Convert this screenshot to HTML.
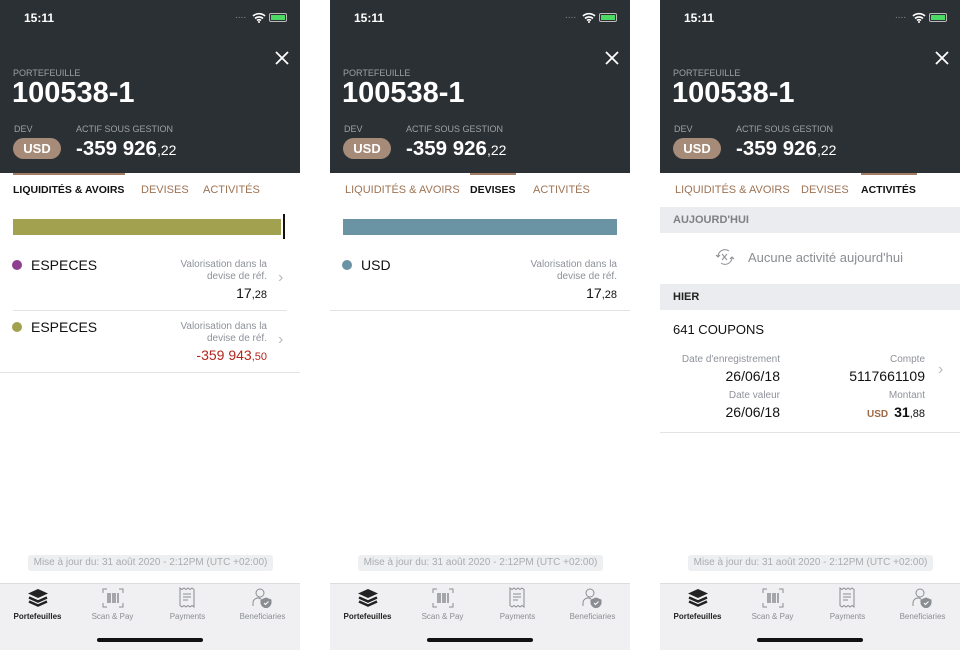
<!DOCTYPE html><html><head><meta charset="utf-8"><style>
*{margin:0;padding:0;box-sizing:border-box}
body{width:960px;height:650px;background:#fff;font-family:"Liberation Sans",sans-serif;position:relative;overflow:hidden}
.p{position:absolute;top:0;width:300px;height:650px;background:#fff;overflow:hidden}
.a{position:absolute;white-space:nowrap}
.hd{position:absolute;left:0;top:0;width:300px;height:173px;background:#2b3034}
.tab{font-size:11px;top:184px;color:#9e7353}
.tab.on{color:#111;font-weight:bold;font-size:10.5px}
.ul{position:absolute;top:173px;height:2px;background:#a27d63}
.gray{color:#8e9299;font-size:10px;text-align:right;line-height:12px}
.chev{color:#bbb;font-size:16px}
.sep{position:absolute;height:1px;background:#e3e3e6}
.bb{position:absolute;left:0;top:583px;width:300px;height:67px;background:#f0f0f2;border-top:1px solid #ddd}
.lbl{font-size:8px;color:#8a8d92;top:612px;text-align:center;width:75px}
.upd{position:absolute;left:28px;top:555px;width:245px;height:16px;background:#eeeff1;border-radius:3px;font-size:10px;color:#a9abaf;text-align:center;line-height:16px}
.home{position:absolute;left:97px;top:638px;width:106px;height:4px;border-radius:2px;background:#111}
.big{left:12px;top:77px;color:#fff;font-size:29px;font-weight:bold}
.amt{left:76px;top:137px;color:#fff;font-size:20.5px;font-weight:bold}
.amt span{font-size:14px;font-weight:normal}
</style></head><body>

<div class="p" style="left:0">
<div class="hd"></div>
<div class="a" style="left:24px;top:11px;color:#fff;font-size:12px;font-weight:bold">15:11</div>
<div class="a" style="left:235px;top:10px;color:#888;font-size:10px">....</div>
<svg class="a" style="left:252px;top:12px" width="14" height="11" viewBox="0 0 14 11"><path d="M1 4a9 9 0 0 1 12 0M3 6.5a6 6 0 0 1 8 0M5 8.5a3 3 0 0 1 4 0" stroke="#fff" stroke-width="1.6" fill="none"/><circle cx="7" cy="10" r="1" fill="#fff"/></svg>
<div class="a" style="left:269px;top:13px;width:18px;height:9px;border:1px solid #bbb;border-radius:2px;padding:1px"><div style="width:100%;height:100%;background:#4cd964"></div></div>
<svg class="a" style="left:275px;top:51px" width="14" height="14"><path d="M1 1L13 13M13 1L1 13" stroke="#fff" stroke-width="1.8"/></svg>
<div class="a" style="left:13px;top:68px;color:#9ca1a6;font-size:9px">PORTEFEUILLE</div>
<div class="a big">100538-1</div>
<div class="a" style="left:14px;top:124px;color:#9ca1a6;font-size:9px">DEV</div>
<div class="a" style="left:76px;top:124px;color:#9ca1a6;font-size:9px">ACTIF SOUS GESTION</div>
<div class="a" style="left:13px;top:138px;width:48px;height:21px;border-radius:11px;background:#a68b79;color:#fff;font-size:13px;font-weight:bold;text-align:center;line-height:21px">USD</div>
<div class="a amt">-359 926<span>,22</span></div>
<div class="ul" style="left:13px;width:112px"></div>
<div class="a tab on" style="left:13px">LIQUIDITÉS &amp; AVOIRS</div>
<div class="a tab" style="left:141px">DEVISES</div>
<div class="a tab" style="left:203px">ACTIVITÉS</div>
<div class="a" style="left:13px;top:219px;width:268px;height:16px;background:#a1a14f"></div>
<div class="a" style="left:283px;top:214px;width:2px;height:25px;background:#111"></div>
<div class="a" style="left:12px;top:260px;width:10px;height:10px;border-radius:50%;background:#8f3f8f"></div>
<div class="a" style="left:31px;top:257px;font-size:14px;color:#111">ESPECES</div>
<div class="a gray" style="right:33px;top:259px">Valorisation dans la<br>devise de réf.</div>
<div class="a" style="right:33px;top:285px;font-size:14px;color:#111">17<span style="font-size:11px">,28</span></div>
<div class="a chev" style="left:278px;top:269px">›</div>
<div class="sep" style="left:13px;width:274px;top:310px"></div>
<div class="a" style="left:12px;top:322px;width:10px;height:10px;border-radius:50%;background:#a1a14f"></div>
<div class="a" style="left:31px;top:319px;font-size:14px;color:#111">ESPECES</div>
<div class="a gray" style="right:33px;top:321px">Valorisation dans la<br>devise de réf.</div>
<div class="a" style="right:33px;top:347px;font-size:14px;color:#b3261e">-359 943<span style="font-size:11px">,50</span></div>
<div class="a chev" style="left:278px;top:331px">›</div>
<div class="sep" style="left:0;width:300px;top:372px"></div>
<div class="upd">Mise à jour du: 31 août 2020 - 2:12PM (UTC +02:00)</div>
<div class="bb"></div>
<svg class="a" style="left:27px;top:588px" width="22" height="20" viewBox="0 0 22 20"><path d="M11 1L21 5.5L11 10L1 5.5Z" fill="#222"/><path d="M2 9.5L11 13.5L20 9.5M2 13.5L11 17.5L20 13.5" stroke="#222" stroke-width="2.5" fill="none"/></svg>
<div class="a lbl" style="left:0;color:#222;font-weight:bold">Portefeuilles</div>
<svg class="a" style="left:102px;top:588px" width="22" height="20" viewBox="0 0 22 20" stroke="#8a8d92" fill="none"><path d="M1 5V1h4M17 1h4v4M21 15v4h-4M5 19H1v-4"/><path d="M6 5v10M8 5v10M11 5v10M13 5v10M16 5v10" stroke-width="1.5"/></svg>
<div class="a lbl" style="left:75px">Scan &amp; Pay</div>
<svg class="a" style="left:179px;top:587px" width="16" height="22" viewBox="0 0 16 22" stroke="#8a8d92" fill="none"><path d="M1 1l2 1.5 2-1.5 2 1.5 2-1.5 2 1.5 2-1.5 2 1.5V20l-2-1.5-2 1.5-2-1.5-2 1.5-2-1.5-2 1.5-2-1.5Z"/><path d="M4 7h8M4 10h8M4 13h5"/></svg>
<div class="a lbl" style="left:150px">Payments</div>
<svg class="a" style="left:252px;top:588px" width="20" height="20" viewBox="0 0 20 20" stroke="#8a8d92" fill="none"><circle cx="8" cy="5" r="4"/><path d="M1 18v-3a5 5 0 0 1 8-4"/><path d="M14 10l5 2v3c0 2-2 4-5 5-3-1-5-3-5-5v-3Z" fill="#8a8d92"/><path d="M12 15l1.5 1.5 3-3" stroke="#fff"/></svg>
<div class="a lbl" style="left:225px">Beneficiaries</div>
<div class="home"></div>
</div>

<div class="p" style="left:330px">
<div class="hd"></div>
<div class="a" style="left:24px;top:11px;color:#fff;font-size:12px;font-weight:bold">15:11</div>
<div class="a" style="left:235px;top:10px;color:#888;font-size:10px">....</div>
<svg class="a" style="left:252px;top:12px" width="14" height="11" viewBox="0 0 14 11"><path d="M1 4a9 9 0 0 1 12 0M3 6.5a6 6 0 0 1 8 0M5 8.5a3 3 0 0 1 4 0" stroke="#fff" stroke-width="1.6" fill="none"/><circle cx="7" cy="10" r="1" fill="#fff"/></svg>
<div class="a" style="left:269px;top:13px;width:18px;height:9px;border:1px solid #bbb;border-radius:2px;padding:1px"><div style="width:100%;height:100%;background:#4cd964"></div></div>
<svg class="a" style="left:275px;top:51px" width="14" height="14"><path d="M1 1L13 13M13 1L1 13" stroke="#fff" stroke-width="1.8"/></svg>
<div class="a" style="left:13px;top:68px;color:#9ca1a6;font-size:9px">PORTEFEUILLE</div>
<div class="a big">100538-1</div>
<div class="a" style="left:14px;top:124px;color:#9ca1a6;font-size:9px">DEV</div>
<div class="a" style="left:76px;top:124px;color:#9ca1a6;font-size:9px">ACTIF SOUS GESTION</div>
<div class="a" style="left:13px;top:138px;width:48px;height:21px;border-radius:11px;background:#a68b79;color:#fff;font-size:13px;font-weight:bold;text-align:center;line-height:21px">USD</div>
<div class="a amt">-359 926<span>,22</span></div>
<div class="ul" style="left:140px;width:46px"></div>
<div class="a tab" style="left:15px">LIQUIDITÉS &amp; AVOIRS</div>
<div class="a tab on" style="left:140px">DEVISES</div>
<div class="a tab" style="left:203px">ACTIVITÉS</div>
<div class="a" style="left:13px;top:219px;width:274px;height:16px;background:#6a93a4"></div>
<div class="a" style="left:12px;top:260px;width:10px;height:10px;border-radius:50%;background:#6a93a4"></div>
<div class="a" style="left:31px;top:257px;font-size:14px;color:#111">USD</div>
<div class="a gray" style="right:13px;top:259px">Valorisation dans la<br>devise de réf.</div>
<div class="a" style="right:13px;top:285px;font-size:14px;color:#111">17<span style="font-size:11px">,28</span></div>
<div class="sep" style="left:0;width:300px;top:310px"></div>
<div class="upd">Mise à jour du: 31 août 2020 - 2:12PM (UTC +02:00)</div>
<div class="bb"></div>
<svg class="a" style="left:27px;top:588px" width="22" height="20" viewBox="0 0 22 20"><path d="M11 1L21 5.5L11 10L1 5.5Z" fill="#222"/><path d="M2 9.5L11 13.5L20 9.5M2 13.5L11 17.5L20 13.5" stroke="#222" stroke-width="2.5" fill="none"/></svg>
<div class="a lbl" style="left:0;color:#222;font-weight:bold">Portefeuilles</div>
<svg class="a" style="left:102px;top:588px" width="22" height="20" viewBox="0 0 22 20" stroke="#8a8d92" fill="none"><path d="M1 5V1h4M17 1h4v4M21 15v4h-4M5 19H1v-4"/><path d="M6 5v10M8 5v10M11 5v10M13 5v10M16 5v10" stroke-width="1.5"/></svg>
<div class="a lbl" style="left:75px">Scan &amp; Pay</div>
<svg class="a" style="left:179px;top:587px" width="16" height="22" viewBox="0 0 16 22" stroke="#8a8d92" fill="none"><path d="M1 1l2 1.5 2-1.5 2 1.5 2-1.5 2 1.5 2-1.5 2 1.5V20l-2-1.5-2 1.5-2-1.5-2 1.5-2-1.5-2 1.5-2-1.5Z"/><path d="M4 7h8M4 10h8M4 13h5"/></svg>
<div class="a lbl" style="left:150px">Payments</div>
<svg class="a" style="left:252px;top:588px" width="20" height="20" viewBox="0 0 20 20" stroke="#8a8d92" fill="none"><circle cx="8" cy="5" r="4"/><path d="M1 18v-3a5 5 0 0 1 8-4"/><path d="M14 10l5 2v3c0 2-2 4-5 5-3-1-5-3-5-5v-3Z" fill="#8a8d92"/><path d="M12 15l1.5 1.5 3-3" stroke="#fff"/></svg>
<div class="a lbl" style="left:225px">Beneficiaries</div>
<div class="home"></div>
</div>

<div class="p" style="left:660px">
<div class="hd"></div>
<div class="a" style="left:24px;top:11px;color:#fff;font-size:12px;font-weight:bold">15:11</div>
<div class="a" style="left:235px;top:10px;color:#888;font-size:10px">....</div>
<svg class="a" style="left:252px;top:12px" width="14" height="11" viewBox="0 0 14 11"><path d="M1 4a9 9 0 0 1 12 0M3 6.5a6 6 0 0 1 8 0M5 8.5a3 3 0 0 1 4 0" stroke="#fff" stroke-width="1.6" fill="none"/><circle cx="7" cy="10" r="1" fill="#fff"/></svg>
<div class="a" style="left:269px;top:13px;width:18px;height:9px;border:1px solid #bbb;border-radius:2px;padding:1px"><div style="width:100%;height:100%;background:#4cd964"></div></div>
<svg class="a" style="left:275px;top:51px" width="14" height="14"><path d="M1 1L13 13M13 1L1 13" stroke="#fff" stroke-width="1.8"/></svg>
<div class="a" style="left:13px;top:68px;color:#9ca1a6;font-size:9px">PORTEFEUILLE</div>
<div class="a big">100538-1</div>
<div class="a" style="left:14px;top:124px;color:#9ca1a6;font-size:9px">DEV</div>
<div class="a" style="left:76px;top:124px;color:#9ca1a6;font-size:9px">ACTIF SOUS GESTION</div>
<div class="a" style="left:13px;top:138px;width:48px;height:21px;border-radius:11px;background:#a68b79;color:#fff;font-size:13px;font-weight:bold;text-align:center;line-height:21px">USD</div>
<div class="a amt">-359 926<span>,22</span></div>
<div class="ul" style="left:201px;width:56px"></div>
<div class="a tab" style="left:15px">LIQUIDITÉS &amp; AVOIRS</div>
<div class="a tab" style="left:141px">DEVISES</div>
<div class="a tab on" style="left:201px">ACTIVITÉS</div>
<div class="a" style="left:0;top:207px;width:300px;height:26px;background:#ebecef"></div>
<div class="a" style="left:13px;top:214px;font-size:11px;font-weight:bold;color:#7d8187">AUJOURD'HUI</div>
<svg class="a" style="left:54px;top:247px" width="22" height="20" viewBox="0 0 22 20" stroke="#8a8d92" fill="none"><path d="M4 9a7 7 0 0 1 11-5M18 11a7 7 0 0 1-11 5"/><path d="M2 8l2 2 2-2M16 12l2-2 2 2M8 7l5 6M13 7l-5 6"/></svg>
<div class="a" style="left:88px;top:250px;font-size:13px;color:#8a8d92">Aucune activité aujourd'hui</div>
<div class="a" style="left:0;top:284px;width:300px;height:26px;background:#ebecef"></div>
<div class="a" style="left:13px;top:291px;font-size:11px;font-weight:bold;color:#222">HIER</div>
<div class="a" style="left:13px;top:322px;font-size:13px;color:#111">641 COUPONS</div>
<div class="a gray" style="right:180px;top:354px">Date d'enregistrement</div>
<div class="a" style="right:180px;top:368px;font-size:14px;color:#111">26/06/18</div>
<div class="a gray" style="right:35px;top:354px">Compte</div>
<div class="a" style="right:35px;top:368px;font-size:14px;color:#111">5117661109</div>
<div class="a chev" style="left:278px;top:361px">›</div>
<div class="a gray" style="right:180px;top:390px">Date valeur</div>
<div class="a" style="right:180px;top:404px;font-size:14px;color:#111">26/06/18</div>
<div class="a gray" style="right:35px;top:390px">Montant</div>
<div class="a" style="right:35px;top:404px;font-size:14px;color:#111;font-weight:bold"><span style="font-size:10px;color:#9e6a45;margin-right:6px">USD</span>31<span style="font-size:11px;font-weight:normal">,88</span></div>
<div class="sep" style="left:0;width:300px;top:432px"></div>
<div class="upd">Mise à jour du: 31 août 2020 - 2:12PM (UTC +02:00)</div>
<div class="bb"></div>
<svg class="a" style="left:27px;top:588px" width="22" height="20" viewBox="0 0 22 20"><path d="M11 1L21 5.5L11 10L1 5.5Z" fill="#222"/><path d="M2 9.5L11 13.5L20 9.5M2 13.5L11 17.5L20 13.5" stroke="#222" stroke-width="2.5" fill="none"/></svg>
<div class="a lbl" style="left:0;color:#222;font-weight:bold">Portefeuilles</div>
<svg class="a" style="left:102px;top:588px" width="22" height="20" viewBox="0 0 22 20" stroke="#8a8d92" fill="none"><path d="M1 5V1h4M17 1h4v4M21 15v4h-4M5 19H1v-4"/><path d="M6 5v10M8 5v10M11 5v10M13 5v10M16 5v10" stroke-width="1.5"/></svg>
<div class="a lbl" style="left:75px">Scan &amp; Pay</div>
<svg class="a" style="left:179px;top:587px" width="16" height="22" viewBox="0 0 16 22" stroke="#8a8d92" fill="none"><path d="M1 1l2 1.5 2-1.5 2 1.5 2-1.5 2 1.5 2-1.5 2 1.5V20l-2-1.5-2 1.5-2-1.5-2 1.5-2-1.5-2 1.5-2-1.5Z"/><path d="M4 7h8M4 10h8M4 13h5"/></svg>
<div class="a lbl" style="left:150px">Payments</div>
<svg class="a" style="left:252px;top:588px" width="20" height="20" viewBox="0 0 20 20" stroke="#8a8d92" fill="none"><circle cx="8" cy="5" r="4"/><path d="M1 18v-3a5 5 0 0 1 8-4"/><path d="M14 10l5 2v3c0 2-2 4-5 5-3-1-5-3-5-5v-3Z" fill="#8a8d92"/><path d="M12 15l1.5 1.5 3-3" stroke="#fff"/></svg>
<div class="a lbl" style="left:225px">Beneficiaries</div>
<div class="home"></div>
</div>
</body></html>
